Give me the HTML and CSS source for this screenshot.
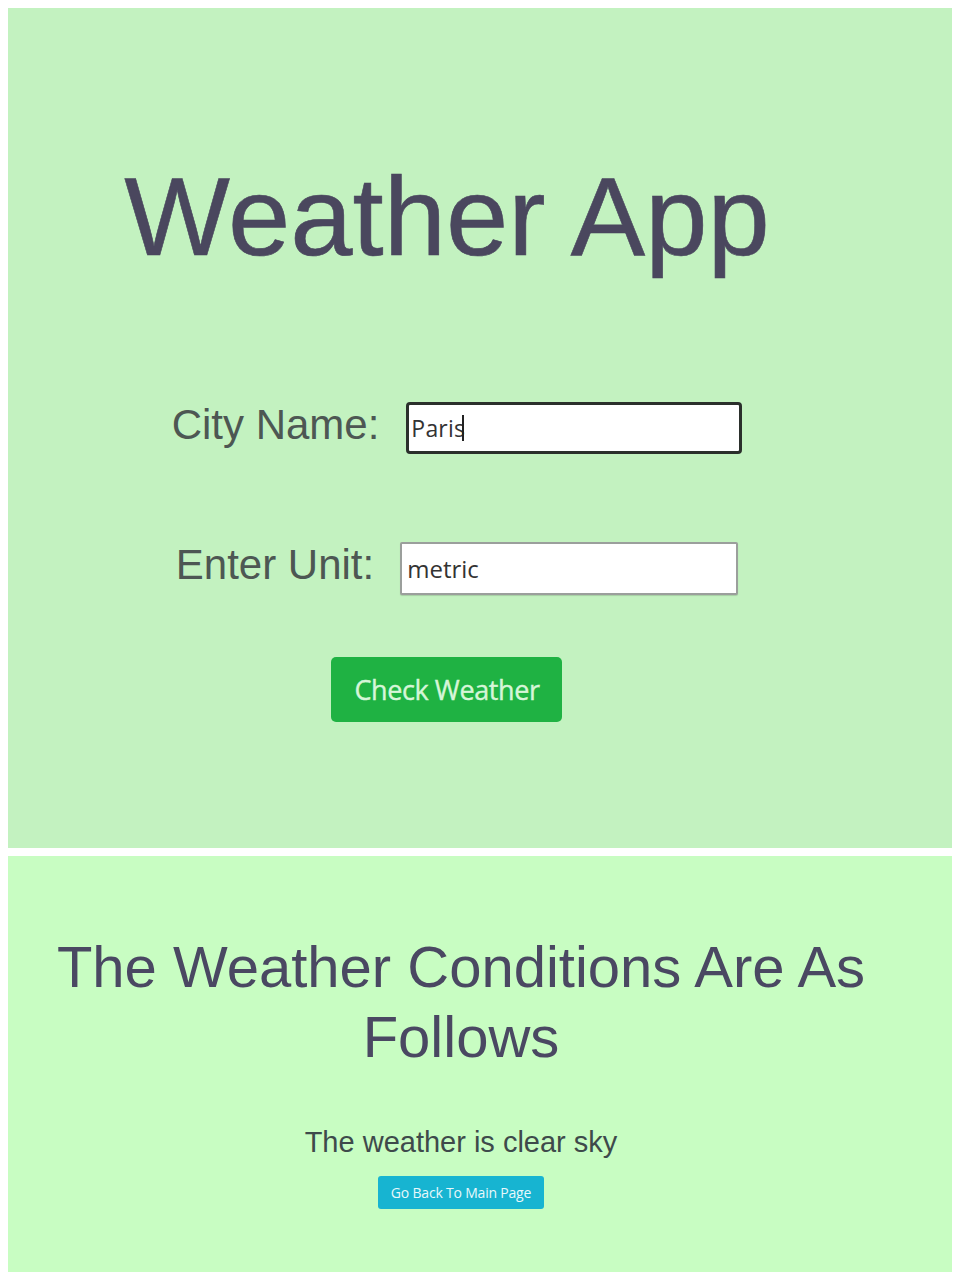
FILE: index.html
```html
<!DOCTYPE html>
<html lang="en">
<head>
<meta charset="utf-8">
<title>Weather App</title>
<link rel="stylesheet" href="styles.css">
</head>
<body>
  <section class="panel panel-form">
    <h1 class="app-title">Weather App</h1>
    <form class="weather-form">
      <div class="form-row">
        <label class="form-label" for="city">City Name:</label>
        <div class="field field-city is-focused"><span class="field-text">Paris</span><span class="caret"></span></div>
      </div>
      <div class="form-row form-row-unit">
        <label class="form-label" for="unit">Enter Unit:</label>
        <div class="field field-unit"><span class="field-text">metric</span></div>
      </div>
      <button type="button" class="btn btn-check">Check Weather</button>
    </form>
  </section>
  <section class="panel panel-result">
    <h2 class="result-title">The Weather Conditions Are As Follows</h2>
    <p class="result-text">The weather is clear sky</p>
    <button type="button" class="btn btn-back">Go Back To Main Page</button>
  </section>
</body>
</html>
```
FILE: styles.css
```css
* {
  box-sizing: border-box;
}

html, body {
  background: #ffffff;
}

body {
  margin: 8px;
  font-family: "Liberation Sans", Arial, sans-serif;
  display: flex;
  flex-direction: column;
  gap: 8px;
}

.panel {
  width: 944px;
  display: flex;
  flex-direction: column;
  align-items: center;
}

.panel-form {
  height: 840px;
  background: #c3f2c0;
  padding: 153px 66px 0 0;
}

.app-title {
  margin: 0;
  font-size: 112px;
  line-height: 1;
  font-weight: 400;
  color: #4a475e;
  -webkit-text-stroke: 0.6px #4a475e;
}

.weather-form {
  margin-top: 128px;
  display: flex;
  flex-direction: column;
  align-items: center;
}

.form-row {
  display: flex;
  align-items: center;
  gap: 27px;
  margin-left: 20px;
}

.form-row-unit {
  margin-top: 86px;
  gap: 26px;
}

.form-label {
  font-size: 42px;
  line-height: 48px;
  padding-bottom: 6px;
  color: #4d5753;
}

.field {
  display: flex;
  align-items: center;
  background: #ffffff;
  font-family: "Open Sans", "Segoe UI", sans-serif;
  color: #333333;
}

.field-city {
  width: 336px;
  height: 52px;
  border: 3px solid #2b302c;
  border-radius: 4px;
  padding: 0 2px;
  font-size: 23px;
  letter-spacing: 0.2px;
}

.field-unit {
  width: 338px;
  height: 53px;
  border: 2px solid #9b9f9c;
  border-radius: 2px;
  padding: 0 5px;
  font-size: 24px;
  box-shadow: 0 1px 1px rgba(0, 0, 0, 0.15);
}

.caret {
  width: 1.5px;
  height: 26px;
  background: #222222;
  margin-left: -3px;
}

.btn {
  border: none;
  cursor: pointer;
  font-family: "Open Sans", "Segoe UI", sans-serif;
}

.btn-check {
  margin-top: 62px;
  width: 231px;
  height: 65px;
  border-radius: 5px;
  background: #1fb243;
  color: #d6f6d8;
  font-size: 27px;
  letter-spacing: -0.4px;
  -webkit-text-stroke: 0.4px #d6f6d8;
  padding: 0;
}

.panel-result {
  height: 416px;
  background: #c8fdc2;
  padding: 76px 38px 0 0;
}

.result-title {
  margin: 0;
  font-size: 58px;
  line-height: 70px;
  font-weight: 400;
  text-align: center;
  color: #4a4862;
}

.result-text {
  margin: 54px 0 0;
  font-size: 29px;
  line-height: 33px;
  color: #3e4a4b;
}

.btn-back {
  margin-top: 17px;
  width: 166px;
  height: 33px;
  border-radius: 3px;
  background: #17b4d1;
  color: #e9f8fb;
  font-size: 14px;
  letter-spacing: -0.2px;
  padding: 0;
}
```
